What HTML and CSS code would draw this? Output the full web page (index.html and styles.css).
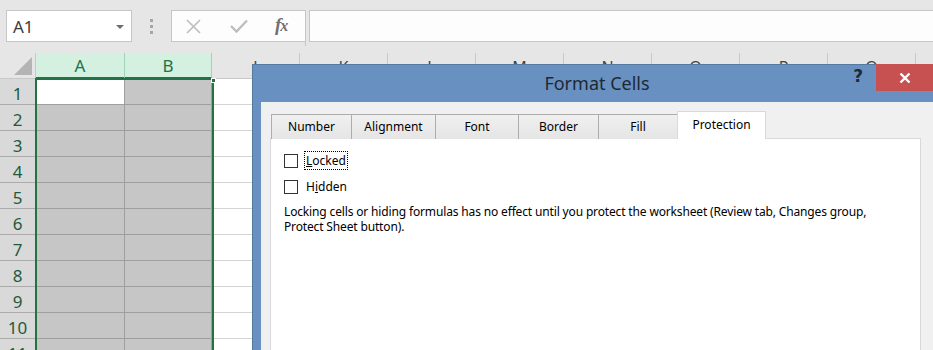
FILE: index.html
```html
<!DOCTYPE html>
<html>
<head>
<meta charset="utf-8">
<link rel="stylesheet" href="styles.css">
</head>
<body>
<div class="app">
  <div class="fbar">
    <div class="namebox">
      <span class="nb-text">A1</span>
      <svg class="nb-arrow" width="8" height="4" viewBox="0 0 8 4"><path d="M0 0H8L4 4Z" fill="#6d6d6d"/></svg>
    </div>
    <div class="grip">
      <svg width="3" height="15" viewBox="0 0 3 15"><rect x="0" y="0" width="3" height="3" fill="#a6a6a6"/><rect x="0" y="6" width="3" height="3" fill="#a6a6a6"/><rect x="0" y="12" width="3" height="3" fill="#a6a6a6"/></svg>
    </div>
    <div class="fbtns">
      <svg class="fb-x" width="15" height="15" viewBox="0 0 15 15"><path d="M1 1L14 14M14 1L1 14" stroke="#bdbdbd" stroke-width="1.6" fill="none"/></svg>
      <svg class="fb-ok" width="18" height="14" viewBox="0 0 18 14"><path d="M1 7L6.5 12.5L17 1.5" stroke="#bdbdbd" stroke-width="2.4" fill="none"/></svg>
      <span class="fx">f<span class="fx-x">x</span></span>
    </div>
    <div class="splitter"></div>
    <div class="finput"></div>
  </div>

  <div class="sheet">
    <div class="hrow">
      <div class="corner"><svg width="18" height="18" viewBox="0 0 18 18"><path d="M18 0V18H0Z" fill="#b4b4b4"/></svg></div>
      <div class="ch sel">A</div>
      <div class="ch sel b">B</div>
      <div class="ch">J</div>
      <div class="ch">K</div>
      <div class="ch">L</div>
      <div class="ch">M</div>
      <div class="ch">N</div>
      <div class="ch">O</div>
      <div class="ch">P</div>
      <div class="ch">Q</div>
    </div>
    <div class="row"><div class="rh">1</div><div class="c a first"></div><div class="c b"></div><div class="c rest"></div></div>
    <div class="row"><div class="rh">2</div><div class="c a"></div><div class="c b"></div><div class="c rest"></div></div>
    <div class="row"><div class="rh">3</div><div class="c a"></div><div class="c b"></div><div class="c rest"></div></div>
    <div class="row"><div class="rh">4</div><div class="c a"></div><div class="c b"></div><div class="c rest"></div></div>
    <div class="row"><div class="rh">5</div><div class="c a"></div><div class="c b"></div><div class="c rest"></div></div>
    <div class="row"><div class="rh">6</div><div class="c a"></div><div class="c b"></div><div class="c rest"></div></div>
    <div class="row"><div class="rh">7</div><div class="c a"></div><div class="c b"></div><div class="c rest"></div></div>
    <div class="row"><div class="rh">8</div><div class="c a"></div><div class="c b"></div><div class="c rest"></div></div>
    <div class="row"><div class="rh">9</div><div class="c a"></div><div class="c b"></div><div class="c rest"></div></div>
    <div class="row"><div class="rh">10</div><div class="c a"></div><div class="c b"></div><div class="c rest"></div></div>
    <div class="row"><div class="rh">11</div><div class="c a"></div><div class="c b"></div><div class="c rest"></div></div>

    <div class="selection"><div class="handle"></div></div>
  </div>

  <div class="dialog">
    <div class="titlebar">
      <div class="tb-side"></div>
      <div class="title">Format Cells</div>
      <div class="tb-side right">
        <span class="help">?</span>
        <span class="close"><svg width="12" height="12" viewBox="0 0 12 12"><path d="M1.5 1.5L10.5 10.5M10.5 1.5L1.5 10.5" stroke="#fff" stroke-width="2.4" fill="none"/></svg></span>
      </div>
    </div>
    <div class="dbody">
      <div class="tabs">
        <div class="tab w-num">Number</div>
        <div class="tab w-align">Alignment</div>
        <div class="tab w-font">Font</div>
        <div class="tab w-border">Border</div>
        <div class="tab w-fill">Fill</div>
        <div class="tab active">Protection</div>
      </div>
      <div class="panel">
        <div class="chk"><span class="box"></span><span class="lbl focus"><u>L</u>ocked</span></div>
        <div class="chk"><span class="box"></span><span class="lbl">H<u>i</u>dden</span></div>
        <p class="note">Locking cells or hiding formulas has no effect until you protect the worksheet (Review tab, Changes group,<br>Protect Sheet button).</p>
      </div>
    </div>
  </div>
</div>
</body>
</html>
```
FILE: styles.css
```css
* { box-sizing: border-box; }
html, body { margin: 0; padding: 0; }
body {
  width: 933px;
  height: 350px;
  overflow: hidden;
  background: #e6e6e6;
  font-family: "Noto Sans", "Open Sans", sans-serif;
}
.app {
  position: relative;
  width: 933px;
  height: 350px;
  overflow: hidden;
}

/* formula bar */
.fbar {
  height: 53px;
  display: flex;
  align-items: flex-start;
  padding-top: 10px;
}
.namebox {
  margin-left: 6px;
  width: 126px;
  height: 32px;
  background: #fff;
  border: 1px solid #c6c6c6;
  display: flex;
  align-items: center;
  padding: 0 7px 0 6px;
}
.nb-text {
  flex: 1;
  font-size: 17px;
  color: #3c3c3c;
  margin-top: 1px;
}
.nb-arrow { margin-top: 2px; }
.grip {
  width: 39px;
  height: 32px;
  display: flex;
  align-items: center;
  justify-content: center;
}
.fbtns {
  width: 135px;
  height: 32px;
  background: #fdfdfd;
  border: 1px solid #c6c6c6;
  display: flex;
  align-items: center;
  padding-left: 14px;
}
.fb-x { margin-right: 29px; }
.fb-ok { margin-right: 27px; }
.fx {
  font-family: "Liberation Serif", serif;
  font-style: italic;
  font-weight: bold;
  font-size: 19px;
  color: #707070;
  letter-spacing: -1px;
  margin-top: -2px;
}
.fx-x { font-size: 16px; }
.splitter {
  width: 4px;
  height: 36px;
  border-left: 1px solid #c6c6c6;
  margin-left: -1px;
}
.finput {
  flex: 1;
  height: 32px;
  background: #fdfdfd;
  border: 1px solid #c6c6c6;
  border-right: none;
}

/* sheet */
.sheet {
  position: relative;
  background: #fff;
}
.hrow {
  display: flex;
  height: 26px;
  background: #e6e6e6;
}
.corner {
  width: 36px;
  border-right: 1px solid #c8c8c8;
  border-bottom: 1px solid #c8c8c8;
  display: flex;
  align-items: flex-end;
  justify-content: flex-end;
  padding: 0 3px 3px 0;
}
.ch {
  width: 88px;
  flex: none;
  border-right: 1px solid #c8c8c8;
  border-bottom: 1px solid #c8c8c8;
  font-size: 16px;
  color: #444;
  text-align: center;
  line-height: 25px;
  padding-top: 2px;
}
.ch.sel {
  width: 89px;
  background: #d3f0e0;
  color: #217346;
  border-right-color: #9fd5b7;
  border-bottom: 2px solid #217346;
  line-height: 24px;
  padding-top: 1px;
  font-size: 17px;
}
.ch.sel.b { width: 87px; }

.row {
  display: flex;
  height: 26px;
}
.rh {
  width: 36px;
  flex: none;
  background: #d9d9d9;
  border-right: 1px solid #9e9e9e;
  border-bottom: 1px solid #ababab;
  color: #1e5a3c;
  font-size: 17px;
  text-align: center;
  line-height: 25px;
  padding-top: 2px;
}
.c {
  border-bottom: 1px solid #d4d4d4;
  border-right: 1px solid #d4d4d4;
  flex: none;
}
.c.a {
  width: 89px;
  background: #c6c6c6;
  border-color: #9e9e9e;
}
.c.b {
  width: 87px;
  background: #c6c6c6;
  border-color: #9e9e9e;
}
.c.a.first { background: #fff; }
.c.rest { flex: 1; border-right: none; }

.selection {
  position: absolute;
  left: 35px;
  top: 25px;
  width: 179px;
  height: 320px;
  border: 2px solid #217346;
  pointer-events: none;
}
.handle {
  position: absolute;
  right: -4px;
  top: -2px;
  width: 5px;
  height: 5px;
  background: #217346;
  border: 1px solid #fff;
}

/* dialog */
.dialog {
  position: absolute;
  left: 252px;
  top: 64px;
  width: 690px;
  height: 300px;
  background: #6891c1;
  border: 1px solid #55799f;
  padding: 0 8px 8px 8px;
  display: flex;
  flex-direction: column;
}
.titlebar {
  height: 37px;
  display: flex;
  align-items: flex-start;
}
.tb-side { flex: 1 1 0; display: flex; justify-content: flex-end; }
.title {
  font-size: 18px;
  color: #1f2833;
  padding-top: 6px;
  white-space: nowrap;
}
.help {
  font-family: "DejaVu Sans", sans-serif;
  font-weight: bold;
  font-size: 17px;
  color: #1d2a38;
  margin-top: 1px;
  margin-right: 13px;
  line-height: 20px;
}
.close {
  width: 57px;
  height: 27px;
  margin-top: -1px;
  background: #c75050;
  display: flex;
  align-items: center;
  justify-content: center;
}
.dbody {
  flex: 1;
  background: #f0f0f0;
  padding: 10px 12px 0 9px;
  display: flex;
  flex-direction: column;
}
.tabs {
  display: flex;
  align-items: flex-end;
  height: 27px;
  padding-left: 1px;
  position: relative;
  z-index: 1;
  margin-bottom: -1px;
}
.tab {
  height: 25px;
  border: 1px solid #adadad;
  border-right: none;
  border-bottom: none;
  background: linear-gradient(#f0f0f0, #e5e5e5);
  font-size: 12px;
  color: #000;
  text-align: center;
  line-height: 24px;
}
.w-num { width: 80px; }
.w-align { width: 84px; }
.w-font { width: 83px; }
.w-border { width: 80px; }
.w-fill { width: 79px; border-right: none; }
.tab.active {
  width: 89px;
  height: 28px;
  background: #fff;
  border: 1px solid #d9d9d9;
  border-bottom: none;
  line-height: 26px;
}
.panel {
  flex: 1;
  background: #fff;
  border: 1px solid #d9d9d9;
  padding: 13px 13px 0 13px;
}
.chk {
  display: flex;
  align-items: center;
  height: 17px;
  margin-bottom: 9px;
}
.box {
  width: 14px;
  height: 14px;
  border: 1px solid #333;
  background: #fff;
  margin-right: 6px;
  flex: none;
}
.lbl {
  font-size: 12px;
  color: #000;
  padding: 0 1px;
  line-height: 17px;
  border: 1px dotted transparent;
}
.lbl.focus { border-color: #000; }
.note {
  margin: 0;
  font-size: 12px;
  line-height: 15px;
  color: #000;
  white-space: nowrap;
  letter-spacing: -0.15px;
}
```
